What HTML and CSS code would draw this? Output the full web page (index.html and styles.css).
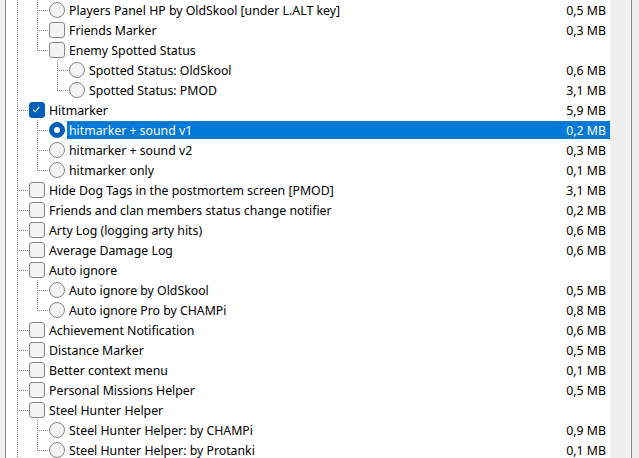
FILE: index.html
```html
<!DOCTYPE html>
<html lang="en">
<head>
<meta charset="utf-8">
<title>Components</title>
<link rel="stylesheet" href="styles.css">
</head>
<body>
<div class="frame">
  <div class="tree">
    <div class="row"><span class="g v"></span><span class="c full"></span><span class="rb"></span><span class="item"><span class="lbl">Players Panel HP by OldSkool [under L.ALT key]</span><span class="sz">0,5 MB</span></span></div>
    <div class="row"><span class="g v"></span><span class="c full"></span><span class="cb"></span><span class="item"><span class="lbl">Friends Marker</span><span class="sz">0,3 MB</span></span></div>
    <div class="row"><span class="g v"></span><span class="c half"></span><span class="cb"></span><span class="item"><span class="lbl">Enemy Spotted Status</span><span class="sz"></span></span></div>
    <div class="row"><span class="g v"></span><span class="g"></span><span class="c full"></span><span class="rb"></span><span class="item"><span class="lbl">Spotted Status: OldSkool</span><span class="sz">0,6 MB</span></span></div>
    <div class="row"><span class="g v"></span><span class="g"></span><span class="c half"></span><span class="rb"></span><span class="item"><span class="lbl">Spotted Status: PMOD</span><span class="sz">3,1 MB</span></span></div>
    <div class="row"><span class="c full"></span><span class="cb on"><svg viewBox="0 0 16 16" width="14" height="14"><path d="M3.5 7.5 L6 10 L10.5 4.5" fill="none" stroke="#fff" stroke-width="1.2"/></svg></span><span class="item"><span class="lbl">Hitmarker</span><span class="sz">5,9 MB</span></span></div>
    <div class="row"><span class="g v"></span><span class="c full"></span><span class="rb on"><span class="dot"></span></span><span class="item sel"><span class="lbl">hitmarker + sound v1</span><span class="sz">0,2 MB</span></span></div>
    <div class="row"><span class="g v"></span><span class="c full"></span><span class="rb"></span><span class="item"><span class="lbl">hitmarker + sound v2</span><span class="sz">0,3 MB</span></span></div>
    <div class="row"><span class="g v"></span><span class="c half"></span><span class="rb"></span><span class="item"><span class="lbl">hitmarker only</span><span class="sz">0,1 MB</span></span></div>
    <div class="row"><span class="c full"></span><span class="cb"></span><span class="item"><span class="lbl">Hide Dog Tags in the postmortem screen [PMOD]</span><span class="sz">3,1 MB</span></span></div>
    <div class="row"><span class="c full"></span><span class="cb"></span><span class="item"><span class="lbl">Friends and clan members status change notifier</span><span class="sz">0,2 MB</span></span></div>
    <div class="row"><span class="c full"></span><span class="cb"></span><span class="item"><span class="lbl">Arty Log (logging arty hits)</span><span class="sz">0,6 MB</span></span></div>
    <div class="row"><span class="c full"></span><span class="cb"></span><span class="item"><span class="lbl">Average Damage Log</span><span class="sz">0,6 MB</span></span></div>
    <div class="row"><span class="c full"></span><span class="cb"></span><span class="item"><span class="lbl">Auto ignore</span><span class="sz"></span></span></div>
    <div class="row"><span class="g v"></span><span class="c full"></span><span class="rb"></span><span class="item"><span class="lbl">Auto ignore by OldSkool</span><span class="sz">0,5 MB</span></span></div>
    <div class="row"><span class="g v"></span><span class="c half"></span><span class="rb"></span><span class="item"><span class="lbl">Auto ignore Pro by CHAMPi</span><span class="sz">0,8 MB</span></span></div>
    <div class="row"><span class="c full"></span><span class="cb"></span><span class="item"><span class="lbl">Achievement Notification</span><span class="sz">0,6 MB</span></span></div>
    <div class="row"><span class="c full"></span><span class="cb"></span><span class="item"><span class="lbl">Distance Marker</span><span class="sz">0,5 MB</span></span></div>
    <div class="row"><span class="c full"></span><span class="cb"></span><span class="item"><span class="lbl">Better context menu</span><span class="sz">0,1 MB</span></span></div>
    <div class="row"><span class="c full"></span><span class="cb"></span><span class="item"><span class="lbl">Personal Missions Helper</span><span class="sz">0,5 MB</span></span></div>
    <div class="row"><span class="c full"></span><span class="cb"></span><span class="item"><span class="lbl">Steel Hunter Helper</span><span class="sz"></span></span></div>
    <div class="row"><span class="g v"></span><span class="c full"></span><span class="rb"></span><span class="item"><span class="lbl">Steel Hunter Helper: by CHAMPi</span><span class="sz">0,9 MB</span></span></div>
    <div class="row"><span class="g v"></span><span class="c half"></span><span class="rb"></span><span class="item"><span class="lbl">Steel Hunter Helper: by Protanki</span><span class="sz">0,1 MB</span></span></div>
  </div>
  <div class="scroll"></div>
</div>
</body>
</html>
```

FILE: styles.css
```css
html, body {
  margin: 0;
  height: 100%;
  overflow: hidden;
  background: #f0f0f0;
}
body {
  font-family: "Noto Sans", "Liberation Sans", sans-serif;
  font-size: 12.3px;
  color: #000;
}
.frame {
  display: flex;
  margin-left: 5px;
  width: 627px;
  height: 100%;
  box-sizing: border-box;
  border-left: 1px solid #868686;
  border-right: 1px solid #868686;
}
.tree {
  width: 604px;
  background: #fff;
  display: flex;
  flex-direction: column;
}
.scroll {
  flex: 1;
  background: #f0f0f0;
}
.row {
  display: flex;
  align-items: center;
  height: 20px;
  flex: none;
}
.g {
  width: 20px;
  height: 20px;
  flex: none;
}
.g.v {
  background: repeating-linear-gradient(to bottom, #8a8a8a 0 1px, transparent 1px 2px) 11px 0 / 1px 100% no-repeat;
}
.c {
  width: 23px;
  height: 20px;
  flex: none;
}
.c.full {
  background:
    repeating-linear-gradient(to right, #8a8a8a 0 1px, transparent 1px 2px) 11px 10px / 12px 1px no-repeat,
    repeating-linear-gradient(to bottom, #8a8a8a 0 1px, transparent 1px 2px) 11px 0 / 1px 100% no-repeat;
}
.c.half {
  background:
    repeating-linear-gradient(to right, #8a8a8a 0 1px, transparent 1px 2px) 11px 10px / 12px 1px no-repeat,
    repeating-linear-gradient(to bottom, #8a8a8a 0 1px, transparent 1px 2px) 11px 0 / 1px 10px no-repeat;
}
.cb, .rb {
  width: 16px;
  height: 16px;
  box-sizing: border-box;
  border: 1px solid #858585;
  background: #f3f3f3;
  flex: none;
  display: flex;
  align-items: center;
  justify-content: center;
}
.cb { border-radius: 3px; }
.rb { border-radius: 50%; }
.cb.on, .rb.on {
  background: #005fb8;
  border-color: #005fb8;
}
.dot {
  width: 6px;
  height: 6px;
  border-radius: 50%;
  background: #fff;
}
.item {
  flex: 1;
  display: flex;
  align-items: center;
  height: 18px;
  margin-left: 2px;
  padding: 0 4px 0 2px;
  white-space: nowrap;
}
.item.sel {
  background: #0078d7;
  color: #fff;
}
.lbl { flex: 1; }
.sz { text-align: right; }
```
